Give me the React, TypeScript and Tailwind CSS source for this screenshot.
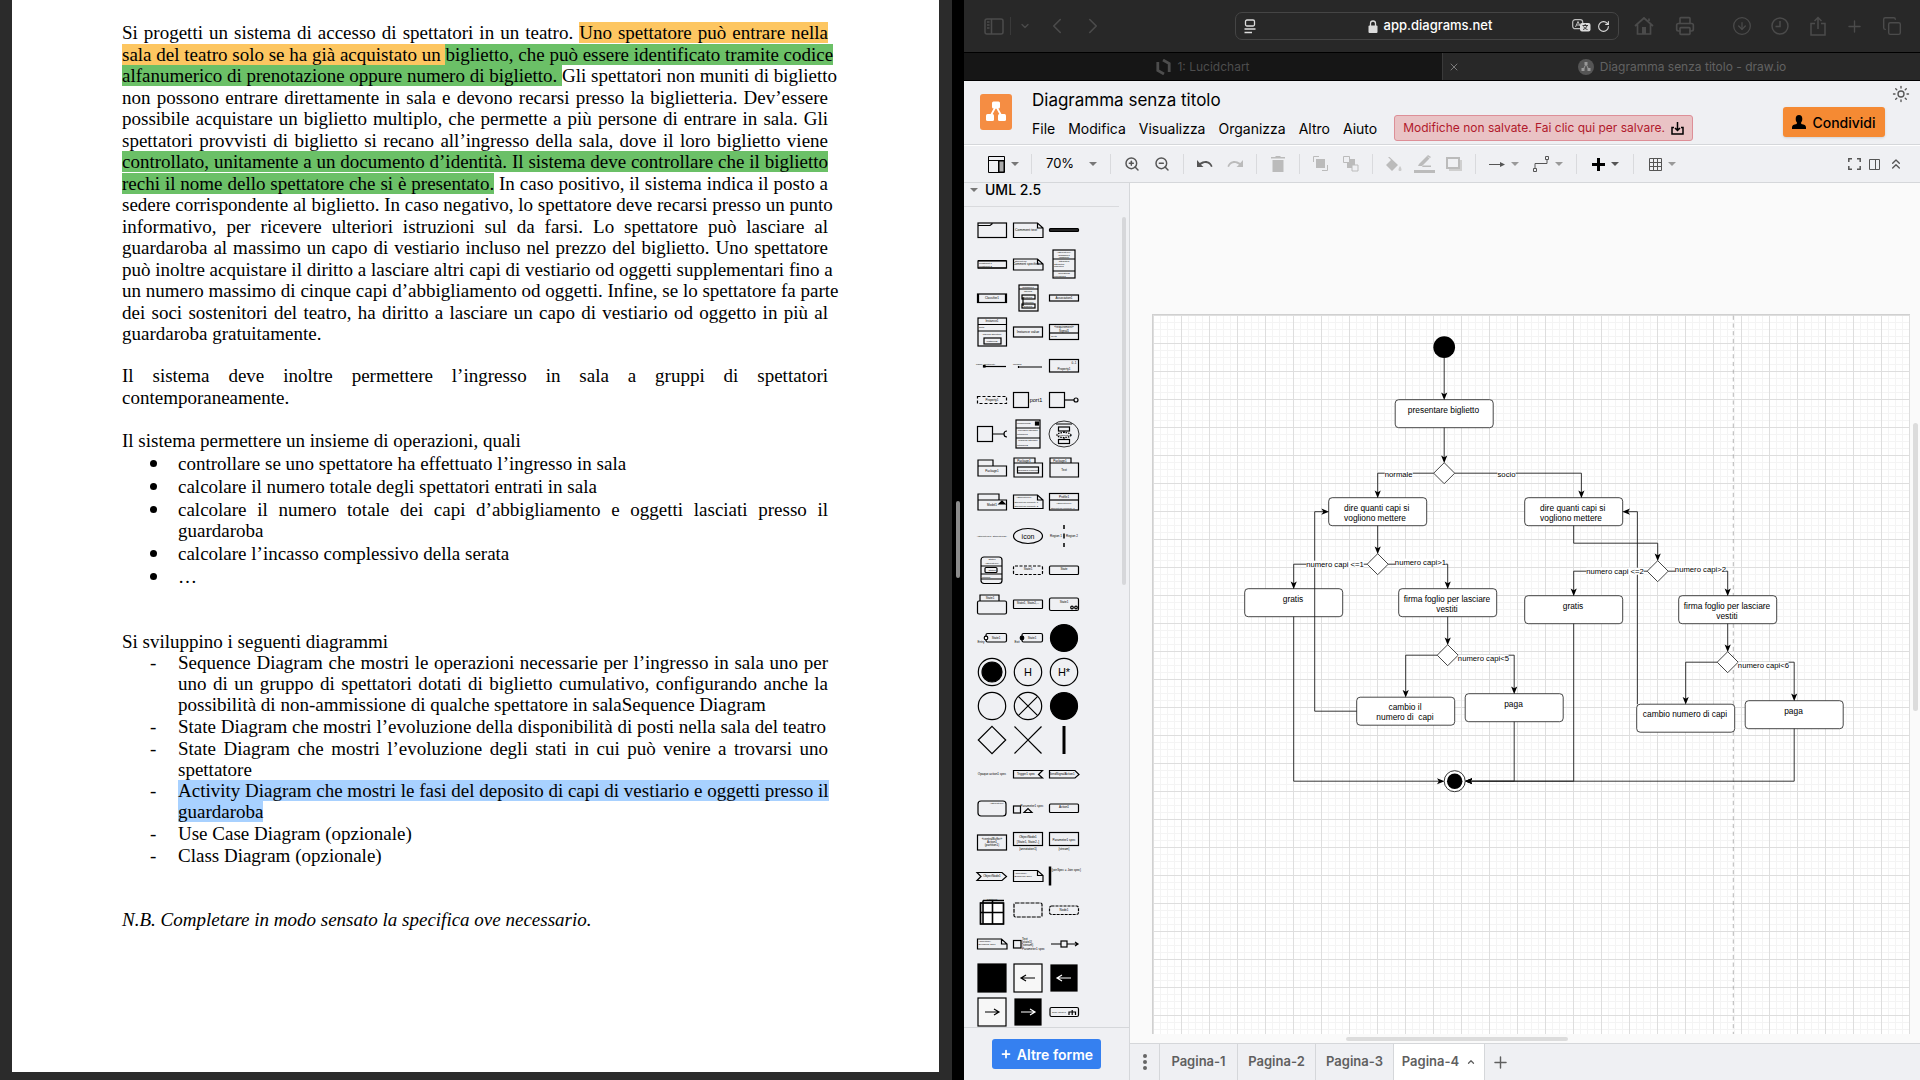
import React from "react";
import { ChevronDown, ChevronLeft, ChevronRight, ChevronUp, ChevronsUp, RotateCw, Plus, X, Copy, CircleArrowDown, Printer, ZoomIn, ZoomOut, Sun } from "lucide-react";

/* ---------- Document pane ---------- */

const orange = "bg-[#fdc661]";
const green = "bg-[#6bc067]";

function Line({ children, last = false }: { children: React.ReactNode; last?: boolean }) {
  return (
    <span className={last ? "block whitespace-nowrap leading-[21px]" : "block leading-[21px] whitespace-nowrap [text-align-last:justify]"}>
      {children}
    </span>
  );
}

function Item({ dot = false, children }: { dot?: boolean; children: React.ReactNode }) {
  return (
    <li className="flex">
      <span className="flex h-[21px] w-7 shrink-0 items-center leading-[21px]">
        {dot ? <span className="h-[7px] w-[7px] rounded-full bg-black" /> : "-"}
      </span>
      <div className="grid flex-1 auto-rows-fr grid-cols-1">{children}</div>
    </li>
  );
}

function DocumentPane() {
  return (
    <section className="min-w-0 overflow-hidden bg-[#2b2b2b] pr-[13px] pb-2 pl-3">
      <article className="h-full bg-white pt-[22px] pr-[111px] pl-[110px] font-['Liberation_Serif',serif] text-[19px] text-black">
        <p className="grid h-[323px] auto-rows-fr grid-cols-1">
          <Line>Si progetti un sistema di accesso di spettatori in un teatro. <span className={orange}>Uno spettatore può entrare nella</span></Line>
          <Line><span className={orange}>sala del teatro solo se ha già acquistato un </span><span className={green}>biglietto, che può essere identificato tramite codice</span></Line>
          <Line><span className={green}>alfanumerico di prenotazione oppure numero di biglietto. </span>Gli spettatori non muniti di biglietto</Line>
          <Line>non possono entrare direttamente in sala e devono recarsi presso la biglietteria. Dev’essere</Line>
          <Line>possibile acquistare un biglietto multiplo, che permette a più persone di entrare in sala. Gli</Line>
          <Line>spettatori provvisti di biglietto si recano all’ingresso della sala, dove il loro biglietto viene</Line>
          <Line><span className={green}>controllato, unitamente a un documento d’identità. Il sistema deve controllare che il biglietto</span></Line>
          <Line><span className={green}>rechi il nome dello spettatore che si è presentato.</span> In caso positivo, il sistema indica il posto a</Line>
          <Line>sedere corrispondente al biglietto. In caso negativo, lo spettatore deve recarsi presso un punto</Line>
          <Line>informativo, per ricevere ulteriori istruzioni sul da farsi. Lo spettatore può lasciare al</Line>
          <Line>guardaroba al massimo un capo di vestiario incluso nel prezzo del biglietto. Uno spettatore</Line>
          <Line>può inoltre acquistare il diritto a lasciare altri capi di vestiario od oggetti supplementari fino a</Line>
          <Line>un numero massimo di cinque capi d’abbigliamento od oggetti. Infine, se lo spettatore fa parte</Line>
          <Line>dei soci sostenitori del teatro, ha diritto a lasciare un capo di vestiario od oggetto in più al</Line>
          <Line last>guardaroba gratuitamente.</Line>
        </p>
        <p className="mt-5 grid h-[43px] auto-rows-fr grid-cols-1">
          <Line>Il sistema deve inoltre permettere l’ingresso in sala a gruppi di spettatori</Line>
          <Line last>contemporaneamente.</Line>
        </p>
        <p className="mt-[22px]"><Line last>Il sistema permettere un insieme di operazioni, quali</Line></p>
        <ul className="mt-[2px] flex flex-col gap-[2px] pl-7">
          <Item dot><Line last>controllare se uno spettatore ha effettuato l’ingresso in sala</Line></Item>
          <Item dot><Line last>calcolare il numero totale degli spettatori entrati in sala</Line></Item>
          <Item dot>
            <Line>calcolare il numero totale dei capi d’abbigliamento e oggetti lasciati presso il</Line>
            <Line last>guardaroba</Line>
          </Item>
          <Item dot><Line last>calcolare l’incasso complessivo della serata</Line></Item>
          <Item dot><Line last>…</Line></Item>
        </ul>
        <p className="mt-[44px]"><Line last>Si sviluppino i seguenti diagrammi</Line></p>
        <ul className="flex h-[214px] flex-col justify-between pl-7">
          <Item>
            <Line>Sequence Diagram che mostri le operazioni necessarie per l’ingresso in sala uno per</Line>
            <Line>uno di un gruppo di spettatori dotati di biglietto cumulativo, configurando anche la</Line>
            <Line last>possibilità di non-ammissione di qualche spettatore in salaSequence Diagram</Line>
          </Item>
          <Item><Line last>State Diagram che mostri l’evoluzione della disponibilità di posti nella sala del teatro</Line></Item>
          <Item>
            <Line>State Diagram che mostri l’evoluzione degli stati in cui può venire a trovarsi uno</Line>
            <Line last>spettatore</Line>
          </Item>
          <Item>
            <Line><span className="bg-[#a8d1ff]">Activity Diagram che mostri le fasi del deposito di capi di vestiario e oggetti presso il</span></Line>
            <Line last><span className="bg-[#a8d1ff]">guardaroba</span></Line>
          </Item>
          <Item><Line last>Use Case Diagram (opzionale)</Line></Item>
          <Item><Line last>Class Diagram (opzionale)</Line></Item>
        </ul>
        <p className="mt-[43px] italic"><Line last>N.B. Completare in modo sensato la specifica ove necessario.</Line></p>
      </article>
    </section>
  );
}

/* ---------- Browser chrome ---------- */

function BrowserBar() {
  const btn = "flex h-7 items-center justify-center text-[#4b4b4b]";
  return (
    <div className="flex h-[52px] shrink-0 items-center bg-[#282828] pr-[9px] pl-[18px]">
      <button aria-label="Barra laterale" className={btn + " w-6"}>
        <svg width="20" height="17" viewBox="0 0 20 17" fill="none" stroke="currentColor" strokeWidth="1.5"><rect x="1" y="1" width="18" height="15" rx="2" /><path d="M7.5 1v15M3 4h2.500M3 7h2.500M3 10h2.500" /></svg>
      </button>
      <span className="mx-1 h-[18px] w-px bg-[#3a3a3a]" />
      <button aria-label="Gruppi" className={btn + " w-5"}><ChevronDown size={12} strokeWidth={2.500} /></button>
      <button aria-label="Indietro" className={btn + " ml-1 w-9"}><ChevronLeft size={26} strokeWidth={1.5} /></button>
      <button aria-label="Avanti" className={btn + " w-9"}><ChevronRight size={26} strokeWidth={1.5} /></button>
      <div className="ml-[124px] flex h-7 min-w-0 flex-1 items-center justify-between rounded-[7px] border border-[#454545] px-2 text-[#dcdcdc]">
        <svg width="12" height="15" viewBox="0 0 12 15" fill="none" stroke="currentColor" strokeWidth="1.300"><rect x="1.500" y="1" width="9" height="6" rx="1.500" /><path d="M.5 10h11M.5 13.500h7.500" /></svg>
        <span className="flex items-center gap-[6px] pl-8 text-[13px] font-medium text-white">
          <svg width="10" height="13" viewBox="0 0 10 13"><rect x=".5" y="5.500" width="9" height="7.500" rx="1" fill="#dcdcdc" /><path d="M2.500 6V3.500a2.500 2.500 0 0 1 5 0V6" fill="none" stroke="#dcdcdc" strokeWidth="1.300" /></svg>
          app.diagrams.net
        </span>
        <span className="flex items-center gap-[6px]">
          <svg width="19" height="14" viewBox="0 0 19 14"><rect x=".7" y=".7" width="10" height="9" rx="2.500" fill="none" stroke="#bdbdbd" strokeWidth="1.200" /><path d="M3.500 8 6 2.500 8 7M4.500 6h3" fill="none" stroke="#bdbdbd" /><rect x="8" y="4" width="10.500" height="8.500" rx="2" fill="#dcdcdc" /><path d="M10.500 6.500h5.500M13.200 5v1.500M11 10.500c2-.5 3.500-2 4-4M11.500 7.500c.8 1.500 2 2.500 4 3" fill="none" stroke="#282828" strokeWidth=".9" /></svg>
          <RotateCw size={13} strokeWidth={2} />
        </span>
      </div>
      <button aria-label="Home" className={btn + " ml-[6px] w-[38px]"}>
        <svg width="20" height="20" viewBox="0 0 20 20" fill="none" stroke="currentColor" strokeWidth="1.700"><path d="M1 10 10 2l9 8M3.500 8.500V18h13V8.500M15 5V2.500" /><rect x="8" y="11" width="4" height="7" fill="currentColor" stroke="none" /></svg>
      </button>
      <button aria-label="Stampa" className={btn + " mr-4 w-[44px]"}><Printer size={20} strokeWidth={2} /></button>
      <button aria-label="Download" className={btn + " w-[38px]"}><CircleArrowDown size={20} strokeWidth={1.500} /></button>
      <button aria-label="Cronologia" className={btn + " w-[38px]"}>
        <svg width="18" height="18" viewBox="0 0 18 18" fill="none" stroke="currentColor" strokeWidth="1.500"><circle cx="9" cy="9" r="8" /><path d="M9 4v5.500H4.500" /></svg>
      </button>
      <button aria-label="Condividi pagina" className={btn + " w-[37px]"}>
        <svg width="16" height="20" viewBox="0 0 16 20" fill="none" stroke="currentColor" strokeWidth="1.500"><path d="M5 7.500H1V19h14V7.500h-4M8 13V1.500M4.500 5 8 1.500 11.500 5" /></svg>
      </button>
      <button aria-label="Nuovo pannello" className={btn + " w-[37px]"}><Plus size={19} strokeWidth={1.700} /></button>
      <button aria-label="Pannelli" className={btn + " w-[38px]"}><Copy size={20} strokeWidth={1.700} /></button>
    </div>
  );
}

function BrowserTabs() {
  return (
    <div className="grid h-[29px] shrink-0 grid-cols-2 border-y border-black text-[12px] text-[#4d4d4d]">
      <button className="flex items-center justify-center gap-[6px] bg-[#161616]">
        <svg width="15" height="16" viewBox="0 0 15 16" fill="none" stroke="#4d4d4d" strokeWidth="2.800"><path d="M1.800 3v8.500L8 15M7 1l6.200 3.500V13" /></svg>
        1: Lucidchart
      </button>
      <div className="flex items-center border-l border-[#3a3a3a] bg-[#282828] pl-[5px] text-[#626262]">
        <button aria-label="Chiudi pannello" className="flex w-3 justify-center text-[#7a7a7a]"><X size={12} /></button>
        <button className="flex flex-1 items-center justify-center gap-[6px] pr-4">
          <svg width="16" height="16" viewBox="0 0 16 16"><circle cx="8" cy="8" r="8" fill="#555" /><path d="M8 5 5 11M8 5l3 6" stroke="#999" /><path d="M6.500 3h3v3h-3zM3.500 9h3v3h-3zM9.500 9h3v3h-3z" fill="#999" /></svg>
          Diagramma senza titolo - draw.io
        </button>
      </div>
    </div>
  );
}

/* ---------- Editor header and toolbar ---------- */

function Header() {
  return (
    <header className="flex h-[64px] shrink-0 border-b border-[#d5d7da] bg-[#eff0f3] pr-[10px] pl-4 text-black">
      <svg className="mt-[13px] shrink-0" width="32" height="36" viewBox="0 0 32 36">
        <rect width="32" height="36" rx="3" fill="#f58d43" />
        <path d="M16 12 10 23M16 12l6 11" stroke="#fff" strokeWidth="1.800" />
        <rect x="12" y="7.500" width="8" height="7" rx="1.500" fill="#fff" /><rect x="6" y="20" width="8" height="7" rx="1.500" fill="#fff" /><rect x="18" y="20" width="8" height="7" rx="1.500" fill="#fff" />
      </svg>
      <div className="ml-5 min-w-0 flex-1">
        <h1 className="mt-[7px] text-[17px] leading-6">Diagramma senza titolo</h1>
        <nav className="mt-[3px] flex h-[26px] items-center gap-[13px] text-[14px] whitespace-nowrap">
          {["File", "Modifica", "Visualizza", "Organizza", "Altro", "Aiuto"].map((m) => <button key={m}>{m}</button>)}
          <button className="ml-1 flex h-[26px] items-center gap-[6px] rounded-[3px] border border-[#dd8f97] bg-[#e9c3c5] px-2 text-[12px] text-[#b1192b]">
            Modifiche non salvate. Fai clic qui per salvare.
            <svg width="13" height="13" viewBox="0 0 13 13" fill="none" stroke="#000" strokeWidth="1.500"><path d="M3 5.500H1v6.500h11V5.500h-2M6.500 0v8M4 6l2.500 2.500L9 6" /></svg>
          </button>
        </nav>
      </div>
      <div className="flex">
        <button className="mt-[26px] flex h-[30px] w-[102px] items-center justify-center gap-[6px] rounded-[3px] bg-[#f58a33] text-[14px] font-medium shadow-sm">
          <svg width="14" height="14" viewBox="0 0 14 14"><ellipse cx="7" cy="4" rx="3.300" ry="4" /><path d="M5 7h4l.3 2c3 .5 4.700 1.300 4.700 3.500V14H0v-1.500C0 10.300 1.700 9.500 4.700 9z" /></svg>
          Condividi
        </button>
        <button aria-label="Aspetto" className="mt-1 ml-[7px] h-[18px] text-[#555]"><Sun size={18} strokeWidth={1.800} /></button>
      </div>
    </header>
  );
}

function Caret({ color = "#777" }: { color?: string }) {
  return <svg width="8" height="4" viewBox="0 0 8 4"><path d="M0 0h8L4 4z" fill={color} /></svg>;
}
function Divider() {
  return <span className="mx-[6px] h-5 w-px bg-[#d9dadd]" />;
}
function Tool({ label, children, drop = false, color }: { label: string; children: React.ReactNode; drop?: boolean; color?: string }) {
  return (
    <button aria-label={label} className={drop ? "flex h-8 w-11 items-center justify-center gap-[6px]" : "flex h-8 w-[30px] items-center justify-center"}>
      {children}
      {drop && <Caret color={color} />}
    </button>
  );
}

function Toolbar() {
  return (
    <div className="mt-px flex h-[37px] shrink-0 items-center border-b border-[#d5d7da] bg-[#eff0f3] pr-3 pl-[17px]">
      <Tool label="Vista" drop>
        <svg width="17" height="17" viewBox="0 0 17 17" fill="none" stroke="#000"><path d="M11 5h5v11h-5z" fill="#aaa" /><path d="M.5.5h16v16H.5zM.5 4.500h16M10.500 4.500v12" /></svg>
      </Tool>
      <Divider />
      <button className="flex h-8 w-[66px] items-center justify-between pr-[7px] pl-2 text-[13px] text-black">70%<Caret /></button>
      <Divider />
      <Tool label="Zoom avanti"><ZoomIn size={16} strokeWidth={2.200} color="#555" /></Tool>
      <Tool label="Zoom indietro"><ZoomOut size={16} strokeWidth={2.200} color="#555" /></Tool>
      <Divider />
      <Tool label="Annulla"><svg width="16" height="8" viewBox="0 0 16 8"><path d="M0 0v7h6.500L4 4.700C8 1.700 12.500 3 14 7l1.500-.5C14 1 8 -1 2.700 3z" fill="#555" /></svg></Tool>
      <Tool label="Ripeti"><svg width="16" height="8" viewBox="0 0 16 8"><path d="M16 0v7H9.500L12 4.700C8 1.700 3.500 3 2 7L.5 6.500C2 1 8 -1 13.300 3z" fill="#bbb" /></svg></Tool>
      <Divider />
      <Tool label="Elimina"><svg width="14" height="16" viewBox="0 0 14 16" fill="#bbb"><path d="M0 1h4l1-1h4l1 1h4v1.500H0zM1.500 4h11v12h-11z" /></svg></Tool>
      <Divider />
      <Tool label="In primo piano"><svg width="16" height="16" viewBox="0 0 16 16"><path d="M3 3h9v9H3z" fill="#bbb" /><path d="M.5 6V.5H6M9 14.500h5.500V9" fill="none" stroke="#bbb" /></svg></Tool>
      <Tool label="In secondo piano"><svg width="16" height="16" viewBox="0 0 16 16"><path d="M4 3h8v9H4z" fill="#bbb" /><path d="M.5.5h6v6h-6zM9 9h6v6H9z" fill="#eff0f3" stroke="#bbb" /></svg></Tool>
      <Divider />
      <Tool label="Riempimento"><svg width="16" height="15" viewBox="0 0 16 15"><path d="m2 0 1-.5L12 8l-6 6-6-6 5-5z" fill="#bbb" /><path d="M14 9c2 3 2 5 0 5s-2-2 0-5z" fill="#ccc" /></svg></Tool>
      <Tool label="Colore linea"><svg width="21" height="18" viewBox="0 0 21 18" fill="#bbb"><path d="M5 9 13 1l2.500 2.500L8 11H4zM14 0l3 2-1 1-3-2zM9 10.500h8V12H8z" /><path d="M0 15h21v3H0z" /></svg></Tool>
      <Tool label="Ombra"><svg width="16" height="14" viewBox="0 0 16 14"><path d="M3 3h13v11H3z" fill="#cfcfcf" /><path d="M1 1h12v10H1z" fill="#eff0f3" stroke="#bbb" strokeWidth="2" /></svg></Tool>
      <Divider />
      <Tool label="Connessione" drop color="#999"><svg width="16" height="7" viewBox="0 0 16 7"><path d="M0 3.500h12" stroke="#555" /><path d="m11 1 5 2.500L11 6z" fill="#555" /></svg></Tool>
      <Tool label="Percorso" drop color="#999"><svg width="16" height="16" viewBox="0 0 16 16" fill="none" stroke="#555"><path d="M2 12V7.500h12V3M.5 12.500h3v3h-3zM12.500.5h3v3h-3z" /></svg></Tool>
      <Divider />
      <Tool label="Inserisci" drop color="#555"><svg width="13" height="13" viewBox="0 0 13 13"><path d="M6.500 0v13M0 6.500h13" stroke="#000" strokeWidth="3" /></svg></Tool>
      <Divider />
      <Tool label="Tabella" drop color="#999"><svg width="13" height="13" viewBox="0 0 13 13" fill="none" stroke="#555"><path d="M.5.5h12v12H.5zM.5 4.500h12M.5 8.500h12M4.500.5v12M8.500.5v12" /></svg></Tool>
      <div className="ml-auto flex items-center gap-2 pr-1 text-[#555]">
        <button aria-label="Schermo intero"><svg width="13" height="12" viewBox="0 0 13 12" fill="none" stroke="currentColor" strokeWidth="1.500"><path d="M.8 4V.8H4M9 .8h3.200V4M12.200 8v3.200H9M4 11.200H.8V8" /></svg></button>
        <button aria-label="Formato"><svg width="11" height="11" viewBox="0 0 11 11" fill="none" stroke="currentColor"><path d="M.5.5h10v10H.5zM6.500.5v10" /></svg></button>
        <button aria-label="Comprimi"><ChevronsUp size={16} strokeWidth={2} /></button>
      </div>
    </div>
  );
}

/* ---------- Shape palette ---------- */

const R = ({ x, y, w, h, r = 0, f = "none", d }: { x: number; y: number; w: number; h: number; r?: number; f?: string; d?: string }) => (
  <rect x={x} y={y} width={w} height={h} rx={r} fill={f} strokeDasharray={d} />
);
const T = ({ x = 18, y, s = 3, a = "middle", children }: { x?: number; y: number; s?: number; a?: "middle" | "start"; children: React.ReactNode }) => (
  <text x={x} y={y} fontSize={s} textAnchor={a} fill="#000" stroke="none">{children}</text>
);
const P = ({ d, f = "none" }: { d: string; f?: string }) => <path d={d} fill={f} />;
const note = (y: number, h: number) => <P d={`M3.500 ${y}h24l5.500 5v${h - 5}H3.500zM27.500 ${y}v5h5.500`} />;

const shapes: React.ReactNode[] = [
  <><R x={4} y={10} w={28.5} h={14.5} /><P d="M4 12.500h12l2-1.500v-1" /></>,
  <>{note(10, 14.5)}<T x={16} y={18} s={3.5}>Comment text</T></>,
  <R x={3.5} y={15.5} w={29} h={3} r={1} f="#222" />,
  <><R x={4} y={14} w={28.5} h={7} /><P d="M4 13.500h28.500M4 21h28.500" /><T x={5} y={17} s={2.5} a="start">constraint 1</T><T x={5} y={20} s={2.5} a="start">constraint 2</T></>,
  <>{note(12, 11)}<T x={5} y={15} s={2.5} a="start">stereotype</T><T x={16} y={18} s={3}>Comment specified</T></>,
  <><R x={7} y={3} w={22} h={28} /><P d="M7 12h22M7 24h22" /><T y={6} s={2.5}>«stereotype»</T><T y={8.500} s={2.5}>Classifier1</T><T y={11} s={2.5}>(abstract)</T><T y={14.500} s={2.5}>attributes</T><T x={8} y={17.500} s={2.5} a="start">attribute1</T><T x={8} y={20} s={2.5} a="start">inherited</T><T y={27} s={2.5}>operations</T><T x={8} y={30} s={2.5} a="start">operation1</T></>,
  <><R x={3.5} y={13} w={29} h={8.5} /><P d="M4.500 13v8.500M31.500 13v8.500" /><T y={18.300}>Classifier1</T></>,
  <><R x={9} y={4} w={19} h={26} /><P d="M9 8h19M13 16v9" /><R x={12} y={14} w={13} h={4} /><R x={12} y={23} w={13} h={4} /><T y={7} s={2.5}>Classifier1</T><T y={11} s={2.5}>internal</T><T y={17} s={2.5}>property</T><T y={21.500} s={2.5}>connector</T><T y={26} s={2.5}>property</T></>,
  <><R x={3.5} y={14} w={29} h={6} /><T y={18}>Association1</T></>,
  <><R x={4} y={3} w={28.5} h={28} /><P d="M4 9.500h28.500M4 16h28.500" /><R x={10} y={23} w={17} h={6} /><T y={7}>Instance1</T><T x={5} y={13} s={2.5} a="start">slot1</T><T y={20} s={2.5}>internal structure</T><T y={27} s={2.5}>Instance2</T></>,
  <><R x={3.5} y={12} w={29} h={10} /><T y={18} s={3.5}>Instance value</T></>,
  <><R x={3.5} y={9.500} w={29} h={15} /><P d="M3.500 18h29" /><T y={13}>«requirement»</T><T y={16.500}>Signal1</T><T x={5} y={22} s={2.5} a="start">Text1</T></>,
  <><P d="M10 17.500h22" /><R x={9.500} y={16.500} w={1.5} h={1.5} f="#000" /><T x={2} y={16} s={2.5} a="start">name: multiplicity</T></>,
  <><P d="M8 18h24M8.500 17v2" /><T x={3} y={16} s={2.5} a="start">method</T></>,
  <><R x={3.5} y={10.500} w={29} h={12.500} /><T x={28} y={15}>0..1</T><T y={20.500}>Property1</T></>,
  <><R x={3.5} y={13.500} w={29} h={7} d="3 2" /><T y={18}>Property1</T></>,
  <><R x={3.5} y={9.500} w={15} h={15} /><T x={26} y={18.500} s={5.5}>port1</T></>,
  <><R x={3.5} y={9.500} w={15} h={15} /><P d="M18.500 17h9.500" /><circle cx="30" cy="17" r="2" fill="none" /></>,
  <><R x={3.5} y={9.500} w={15} h={15} /><P d="M18.500 17h11M33 14a3 3 0 1 0 0 6" /></>,
  <><R x={6} y={3} w={24} h={28} /><P d="M6 11h24M6 21h24" /><R x={25.500} y={5} w={3} h={3} f="#000" /><T x={7} y={7} s={2.5} a="start">component1</T><T y={14} s={2.5}>provided interface</T><T x={7} y={18} s={2.5} a="start">interface1</T><T y={24} s={2.5}>required interface</T><T x={7} y={28.500} s={2.5} a="start">interface2</T></>,
  <><ellipse cx="18" cy="17" rx="15" ry="13" fill="none" strokeWidth=".8" /><R x={12.500} y={10} w={11} h={4} /><ellipse cx="18" cy="18" rx="7" ry="2.500" fill="none" strokeDasharray="1.500 1" /><R x={12.500} y={22.500} w={11} h={4} /><P d="M18 14v2M18 20.500v2M10 7h16" /><T y={18.700} s={2.5}>Collaboration</T></>,
  <><P d="M4 15V9h15v6M4 15h28.500v10H4z" /><T y={20.500}>Package1</T></>,
  <><P d="M4 12V7h21v5M4 12h28.500v14H4z" /><R x={7.500} y={16} w={21} h={6} /><T x={14} y={11} s={3}>Package1</T><T y={20} s={2.5}>Packaged element1</T></>,
  <><P d="M4 12V7h21v5M4 12h28.500v14H4z" /><T x={14} y={11}>Package1</T><T y={20}>Text</T></>,
  <><P d="M4 15V9h21v6M4 15h28.500v10H4z" /><P d="m25 19 3-3 3 3z" f="#000" /><T y={20.500}>Model1</T></>,
  <>{note(10, 13.5)}<T x={14} y={13} s={2.5}>«stereotype1»</T><T x={4.500} y={17.500} s={2.5} a="start">stereotype property 1</T><T x={4.500} y={22} s={2.5} a="start">stereotype property 2</T></>,
  <><R x={3.5} y={8.500} w={29} h={16.500} /><P d="M3.500 15h29" /><T y={13}>Profile1</T><T y={18.500} s={2.5}>«stereotype1»</T><T x={5} y={23.500} s={2.5} a="start">stereotype property 1</T></>,
  <T y={18} s={2.5}>«stereotype1, stereotype2»</T>,
  <><ellipse cx="18" cy="17" rx="14.500" ry="7.500" fill="none" /><T y={19.500} s={7}>icon</T></>,
  <><path d="M18 6v4M18 14.500v5M18 24v4" strokeWidth="1.500" /><T x={10} y={18} s={3}>Region 1</T><T x={26} y={18} s={3}>Region 2</T></>,
  <><R x={7} y={4} w={21} h={26.500} r={3} /><P d="M7 13h21M7 21h21M7 26h21" /><R x={11} y={14.500} w={12} h={5} r={1} /><T y={7} s={2.5}>State1</T><T y={11} s={2.5}>«stereotype»</T><T y={18} s={2.5}>State2</T><T x={8} y={24.500} s={2.5} a="start">internal</T></>,
  <><R x={3.5} y={13} w={29} h={8.500} r={1.5} d="3 1.500" /><T y={16.500}>State1</T></>,
  <><R x={3.5} y={13} w={29} h={8.500} r={1} /><T y={16.500}>State</T></>,
  <><R x={3.5} y={14} w={29} h={13} r={1.5} /><P d="M6 14V8h19v6" /><T x={16} y={11.500}>State1</T></>,
  <><R x={3.5} y={13} w={29} h={8.500} r={.5} /><T y={16.500}>State1, State2,...</T></>,
  <><R x={3.5} y={11} w={29} h={12.500} r={1.5} /><T y={15.500}>State1</T><circle cx="26" cy="20.500" r="1.300" fill="none" /><circle cx="30" cy="20.500" r="1.300" fill="none" /></>,
  <><R x={12} y={12.500} w={20.500} h={8.500} r={1.5} /><circle cx="12" cy="17" r="1.800" fill="#fff" /><T x={22} y={18}>State1</T><T x={7} y={22}>Entry</T></>,
  <><R x={12} y={12.500} w={20.500} h={8.500} r={1.5} /><circle cx="12" cy="17" r="1.800" fill="#000" /><T x={22} y={18}>State1</T><T x={7} y={22}>Exit</T></>,
  <circle cx="18" cy="17" r="13.500" />,
  <><circle cx="18" cy="17" r="13.700" fill="none" /><circle cx="18" cy="17" r="10" /></>,
  <><circle cx="18" cy="17" r="13.700" fill="none" /><T y={21} s={11}>H</T></>,
  <><circle cx="18" cy="17" r="13.700" fill="none" /><T y={21} s={11}>H*</T></>,
  <circle cx="18" cy="17" r="13.700" fill="none" />,
  <><circle cx="18" cy="17" r="13.700" fill="none" /><P d="m8.300 7.300 19.400 19.400M27.700 7.300 8.300 26.700" /></>,
  <circle cx="18" cy="17" r="13.500" />,
  <P d="m18 3.300 13.700 13.700L18 30.700 4.300 17z" />,
  <P d="m4.500 3.500 27 27M31.500 3.500l-27 27" />,
  <path d="M18 3v28" strokeWidth="3" />,
  <T y={18} s={3}>Opaque action1 spec</T>,
  <><P d="M3.500 13.500h29l-4 4 4 3.500h-29z" /><T x={16} y={18.300}>Trigger1 spec</T></>,
  <><P d="M3.500 13.500H29l4 4-4 3.500H3.500z" /><T x={16} y={18.300}>SendSignalAction1</T></>,
  <><R x={4} y={10} w={28} h={15} r={3} /><T x={23} y={13} s={2.5}>«stereotype»</T></>,
  <><R x={3.5} y={15} w={7} h={7} /><P d="m14 21.500 4-4 4 4z" /><T x={22} y={16} s={3}>Parameter1 spec</T></>,
  <><R x={3.5} y={13} w={29} h={8.500} r={1} /><T y={17}>Action1</T></>,
  <><R x={3.5} y={10} w={29} h={15} /><T y={14.500}>«centralBuffer»</T><T y={17.800}>Action1</T><T y={21}>(partition1)</T></>,
  <><R x={3.5} y={7.500} w={29} h={13} /><T y={12.500}>ObjectNode1</T><T y={18}>[State1, State2..]</T><T y={24.500}>{"{annotation1}"}</T></>,
  <><R x={3.5} y={7.500} w={29} h={13} /><T y={15.500}>Parameter1 spec</T><T y={24.500}>{"{stream}"}</T></>,
  <><P d="M3 13.500h25l4.500 4-4.500 4H3l4-4z" /><T y={18.300}>ObjectNode1</T></>,
  <>{note(11.5, 11)}<T x={4.500} y={15} s={2.5} a="start">«selection»</T><T x={4.500} y={17.500} s={2.5} a="start">Behavior1 spec</T></>,
  <><path d="M4 7.500v19" strokeWidth="2.500" /><T x={5.500} y={12} s={3} a="start">{"{joinSpec = Join spec}"}</T></>,
  <><P d="M6.500 10h23v21h-23z" f="#fff" /><path d="M6.500 10h23v21h-23zM9 7.500h21M9 7.500V31M18.500 8v23M6.500 19.500h23" fill="none" strokeWidth="1.600" /><T y={7} s={2.5}>Partition1</T></>,
  <R x={4} y={10} w={28} h={14} r={1.5} d="4 1" />,
  <><R x={3.5} y={13} w={29} h={8.500} r={2} d="3 1" /><T y={18}>Node1</T></>,
  <>{note(12, 10)}<T x={4.500} y={15} s={2.5} a="start">«selection»</T><T x={4.500} y={17.500} s={2.5} a="start">Decision1 spec</T></>,
  <><R x={3.5} y={13.500} w={7.500} h={7.500} /><T x={12} y={13} s={3} a="start">Text</T><T x={12} y={16} s={3} a="start">{"[state1]"}</T><T x={12} y={19} s={3} a="start">{"{stream}"}</T><T x={12} y={22.500} s={3} a="start">Parameter1 spec</T></>,
  <><P d="M5 17h10M21 17h10M29 15l3 2-3 2" /><R x={15} y={14} w={6} h={6} /></>,
  <R x={4} y={3} w={28} h={28} f="#000" />,
  <><R x={4} y={3} w={28} h={28} f="#f7f7f7" /><P d="M25 17H11M16 14l-5 3 5 3" /></>,
  <><R x={5} y={4} w={26} h={26} f="#000" /><path d="M25 17H11M16 14l-5 3 5 3" fill="none" stroke="#fff" /></>,
  <><R x={4} y={3} w={28} h={28} f="#f7f7f7" /><P d="M11 17h14M20 14l5 3-5 3" /></>,
  <><R x={5} y={4} w={26} h={26} f="#000" /><path d="M11 17h14M20 14l5 3-5 3" fill="none" stroke="#fff" /></>,
  <><R x={4} y={12.500} w={28.500} h={9} r={1.500} /><T x={13} y={18} s={2.5}>SubActivity1</T><P d="M23 20v-3h6.500v3M26.200 20v-5" /></>,
];

function Palette() {
  return (
    <aside className="flex w-[166px] shrink-0 flex-col border-r border-[#d5d7da] bg-[#eff0f3]">
      <div className="min-h-0 flex-1">
        <div className="flex">
          <div className="flex-1">
            <h2 className="flex h-6 items-start border-b border-[#d9dadd]">
              <button className="flex items-center gap-[7px] pl-[6px] text-[14px] leading-[14px] font-medium text-black"><Caret />UML 2.5</button>
            </h2>
            <div className="mt-[6px] ml-[10px] grid w-[108px] grid-cols-3 font-['Liberation_Sans',sans-serif]">
              {shapes.map((s, i) => (
                <button key={i} aria-label={`Forma ${i + 1}`} className="h-[34px]">
                  <svg width="36" height="34" viewBox="0 0 36 34" stroke="#000" strokeWidth="1.200">{s}</svg>
                </button>
              ))}
            </div>
          </div>
          <div className="mt-[34px] mr-[3px] ml-[3px] h-[368px] w-1 rounded-full bg-[#d6d7da]" />
        </div>
      </div>
      <div className="flex h-[53px] shrink-0 items-start justify-center border-t border-[#d5d7da] pt-[11px]">
        <button className="flex h-[30px] w-[109px] items-center justify-center gap-[5px] rounded-[3px] bg-[#3580f0] text-[14px] font-semibold text-white">
          <Plus size={12} strokeWidth={3.500} />Altre forme
        </button>
      </div>
    </aside>
  );
}

/* ---------- Diagram ---------- */

type NodeSpec = { x: number; y: number; lines: string[]; left?: boolean };
const nodes: NodeSpec[] = [
  { x: 345, y: 120, lines: ["presentare biglietto"] },
  { x: 250, y: 260, lines: ["dire quanti capi si", "vogliono mettere"], left: true },
  { x: 530, y: 260, lines: ["dire quanti capi si", "vogliono mettere"], left: true },
  { x: 130, y: 390, lines: ["gratis"] },
  { x: 350, y: 390, lines: ["firma foglio per lasciare", "vestiti"] },
  { x: 530, y: 400, lines: ["gratis"] },
  { x: 750, y: 400, lines: ["firma foglio per lasciare", "vestiti"] },
  { x: 290, y: 545, lines: ["cambio il", "numero di\u00a0 capi"] },
  { x: 445, y: 540, lines: ["paga"] },
  { x: 690, y: 555, lines: ["cambio numero di capi"] },
  { x: 845, y: 550, lines: ["paga"] },
];
const decisions = [[415, 225], [320, 355], [720, 365], [420, 485], [820, 495]];
const edges = [
  "M415 60V114", "M415 160V204", "M400 225H320V254", "M430 225H611V254", "M320 300V334",
  "M290 565H230V280H244", "M305 355H200V384", "M335 355H420V384", "M420 430V464",
  "M405 485H360V539", "M435 485H515V534", "M200 430V665H409", "M600 300V325H720V344",
  "M705 365H600V394", "M735 365H820V394", "M820 440V474", "M805 495H760V549",
  "M835 495H915V544", "M691 555V280H676", "M515 580V665H451", "M600 440V665H451", "M915 590V665H451",
];
const labels: [number, number, string, number][] = [
  [350, 227, "normale", 40], [504, 227, "socio", 26], [259, 355, "numero capi <=1", 82], [381, 352, "numero capi>1", 72],
  [659, 365, "numero capi <=2", 82], [781, 362, "numero capi>2", 72], [471, 489, "numero capi<5", 72], [871, 499, "numero capi<6", 72],
];

function Diagram() {
  return (
    <svg className="absolute top-0 left-0 h-[721px] w-[756px]" viewBox="-1 -1 1080 1030" fontFamily="Liberation Sans, Arial, sans-serif" fontSize="12">
      <defs>
        <marker id="tip" viewBox="0 0 10 10" refX="4" refY="5" markerWidth="11" markerHeight="11" markerUnits="userSpaceOnUse" orient="auto"><path d="M0 1 10 5 0 9l2.500-4z" /></marker>
      </defs>
      <path d="M828 0v1030" stroke="#999" strokeDasharray="6 5" />
      <circle cx="415" cy="45" r="15.500" />
      {nodes.map((n, i) => <rect key={i} x={n.x} y={n.y} width="140" height="40" rx="5" fill="#fff" stroke="#222" strokeWidth="1.200" />)}
      {edges.map((d) => <path key={d} d={d} fill="none" stroke="#222" strokeWidth="1.300" markerEnd="url(#tip)" />)}
      {decisions.map(([x, y]) => <path key={`${x}-${y}`} d={`M${x} ${y - 15}l15 15-15 15-15-15z`} fill="#fff" stroke="#222" strokeWidth="1.200" />)}
      <circle cx="430" cy="665" r="15" fill="#fff" stroke="#222" strokeWidth="1.300" />
      <circle cx="430" cy="665" r="11" />
      {labels.map(([x, y, t, w]) => (
        <g key={t}>
          <rect x={x - w / 2} y={y - 5} width={w} height="10" fill="#fff" />
          <text x={x} y={y + 4} fontSize="11" textAnchor="middle">{t}</text>
        </g>
      ))}
      {nodes.map((n, i) => n.lines.map((t, j) => (
        <text key={`${i}-${j}`} x={n.left ? n.x + 22 : n.x + 69} y={n.y + 19 + j * 14} textAnchor={n.left ? "start" : "middle"}>{t}</text>
      )))}
    </svg>
  );
}

function Canvas() {
  return (
    <div className="flex min-h-0 flex-1 flex-col bg-[#fafafa]">
      <div className="flex min-h-0 flex-1 pl-[22px]">
        <div className="relative mt-[131px] min-w-0 flex-1 overflow-hidden border-t border-l border-[#d0d0d0] bg-white bg-[linear-gradient(to_right,transparent_27px,#dedede_27px),linear-gradient(to_bottom,transparent_27px,#dedede_27px),linear-gradient(to_right,transparent_6px,#f4f4f4_6px),linear-gradient(to_bottom,transparent_6px,#f4f4f4_6px)] bg-[size:28px_28px,28px_28px,7px_7px,7px_7px] bg-[position:1px_1px]">
          <Diagram />
        </div>
        <div className="mt-[240px] mr-[2px] ml-[3px] h-[288px] w-[5px] rounded-full bg-[#dcdcdc]" />
      </div>
      <div className="flex h-[9px] shrink-0 items-center pl-[216px]"><div className="h-1 w-[222px] rounded-full bg-[#dcdcdc]" /></div>
    </div>
  );
}

function PageTabs() {
  return (
    <footer className="flex h-[37px] shrink-0 border-t border-[#d5d7da] bg-[#eff0f3] text-[13px] font-semibold text-[#5f5f5f]">
      <button aria-label="Pagine" className="flex w-[30px] items-center justify-center border-r border-[#d5d7da]">
        <svg width="4" height="16" viewBox="0 0 4 16" fill="#666"><circle cx="2" cy="2" r="2" /><circle cx="2" cy="8" r="2" /><circle cx="2" cy="14" r="2" /></svg>
      </button>
      {["Pagina-1", "Pagina-2", "Pagina-3"].map((p) => <button key={p} className="w-[78px] border-r border-[#d5d7da]">{p}</button>)}
      <button className="flex w-[91px] items-center justify-center gap-[7px] border-r border-[#d5d7da] bg-white">Pagina-4<ChevronUp size={10} strokeWidth={3} /></button>
      <button aria-label="Aggiungi pagina" className="flex w-[30px] items-center justify-center"><Plus size={19} strokeWidth={1.800} /></button>
    </footer>
  );
}

export default function App() {
  return (
    <main className="grid h-screen grid-cols-[952fr_12px_956fr] overflow-hidden bg-black">
      <DocumentPane />
      <div className="pt-[501px] pl-1"><div className="h-[77px] w-1 rounded-full bg-[#8c8c8c]" /></div>
      <section className="flex min-h-0 min-w-0 flex-col bg-white font-['Inter',sans-serif]">
        <BrowserBar />
        <BrowserTabs />
        <Header />
        <Toolbar />
        <div className="flex min-h-0 flex-1">
          <Palette />
          <div className="flex min-w-0 flex-1 flex-col">
            <Canvas />
            <PageTabs />
          </div>
        </div>
      </section>
    </main>
  );
}
